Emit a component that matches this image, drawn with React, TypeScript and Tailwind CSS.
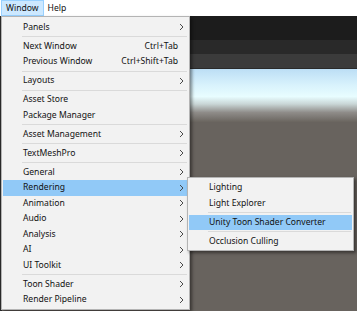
import React from "react";

type Entry = { label: string; shortcut?: string; sub?: boolean; active?: boolean } | "sep";

const windowMenu: Entry[] = [
  { label: "Panels", sub: true },
  "sep",
  { label: "Next Window", shortcut: "Ctrl+Tab" },
  { label: "Previous Window", shortcut: "Ctrl+Shift+Tab" },
  "sep",
  { label: "Layouts", sub: true },
  "sep",
  { label: "Asset Store" },
  { label: "Package Manager" },
  "sep",
  { label: "Asset Management", sub: true },
  "sep",
  { label: "TextMeshPro", sub: true },
  "sep",
  { label: "General", sub: true },
  { label: "Rendering", sub: true, active: true },
  { label: "Animation", sub: true },
  { label: "Audio", sub: true },
  { label: "Analysis", sub: true },
  { label: "AI", sub: true },
  { label: "UI Toolkit", sub: true },
  "sep",
  { label: "Toon Shader", sub: true },
  { label: "Render Pipeline", sub: true },
];

const renderingMenu: Entry[] = [
  { label: "Lighting" },
  { label: "Light Explorer" },
  "sep",
  { label: "Unity Toon Shader Converter", active: true },
  "sep",
  { label: "Occlusion Culling" },
];

function Chevron() {
  return (
    <svg width="5" height="8" viewBox="0 0 5 8" className="shrink-0">
      <path d="M1 1 L4 4 L1 7" fill="none" stroke="#4a4a4a" strokeWidth="1" />
    </svg>
  );
}

function MenuList({ items }: { items: Entry[] }) {
  return (
    <>
      {items.map((it, i) =>
        it === "sep" ? (
          <div key={i} className="h-[3.5px] flex items-center pl-[19px] pr-[1px]">
            <div className="h-px w-full bg-[#dadada]" />
          </div>
        ) : (
          <div
            key={i}
            className={`h-[15.5px] flex items-center pl-[20px] pr-[4px] ${it.active ? "bg-[#91c9f7]" : ""}`}
          >
            <span className="flex-1 whitespace-nowrap">{it.label}</span>
            {it.shortcut && <span className="whitespace-nowrap pr-[6px]">{it.shortcut}</span>}
            {it.sub && <Chevron />}
          </div>
        )
      )}
    </>
  );
}

export default function App() {
  return (
    <div
      className="relative w-[357px] h-[311px] overflow-hidden bg-[#68635e] text-[8.6px] text-[#111]"
      style={{ fontFamily: '"Segoe UI", "Noto Sans", sans-serif' }}
    >
      {/* menu bar */}
      <div className="h-[16px] bg-white flex items-center gap-[3px] pl-[1px]">
        <div className="h-[16px] px-[4px] pt-px flex items-center bg-[#cce8ff] border border-[#99d1ff]">Window</div>
        <div className="px-[1px] pt-px">Help</div>
      </div>

      {/* scene view */}
      <div className="flex h-[295px]">
        <div className="w-[2px] bg-[#2b2b2b]" />
        <div className="flex-1 flex flex-col">
          <div className="h-[24px] bg-[#1c1c1c]" />
          <div className="h-[14px] bg-[#292929]" />
          <div className="h-[15px] bg-[#3b3b3b] border-b border-[#2a2a2a]" />
          <div className="h-[53px] bg-[linear-gradient(to_bottom,#bcdef5_0%,#d8f2fc_30%,#e8fdff_52%,#c9d6d6_66%,#8f8c89_82%,#6a655f_100%)]" />
          <div className="flex-1 bg-[#68635e]" />
        </div>
      </div>

      {/* Window menu */}
      <div className="absolute left-[1px] top-[16px] w-[189px] bg-[#f2f2f2] border border-[#b4b4b4] px-[1px] pt-[2.5px] pb-[1px] shadow-[2px_2px_3px_rgba(0,0,0,0.45)]">
        <MenuList items={windowMenu} />
      </div>

      {/* Rendering submenu */}
      <div className="absolute left-[187px] top-[177px] w-[167px] bg-[#f2f2f2] border border-[#b4b4b4] px-[1px] pt-[2px] pb-[1px] shadow-[2px_2px_3px_rgba(0,0,0,0.45)]">
        <MenuList items={renderingMenu} />
      </div>
    </div>
  );
}
